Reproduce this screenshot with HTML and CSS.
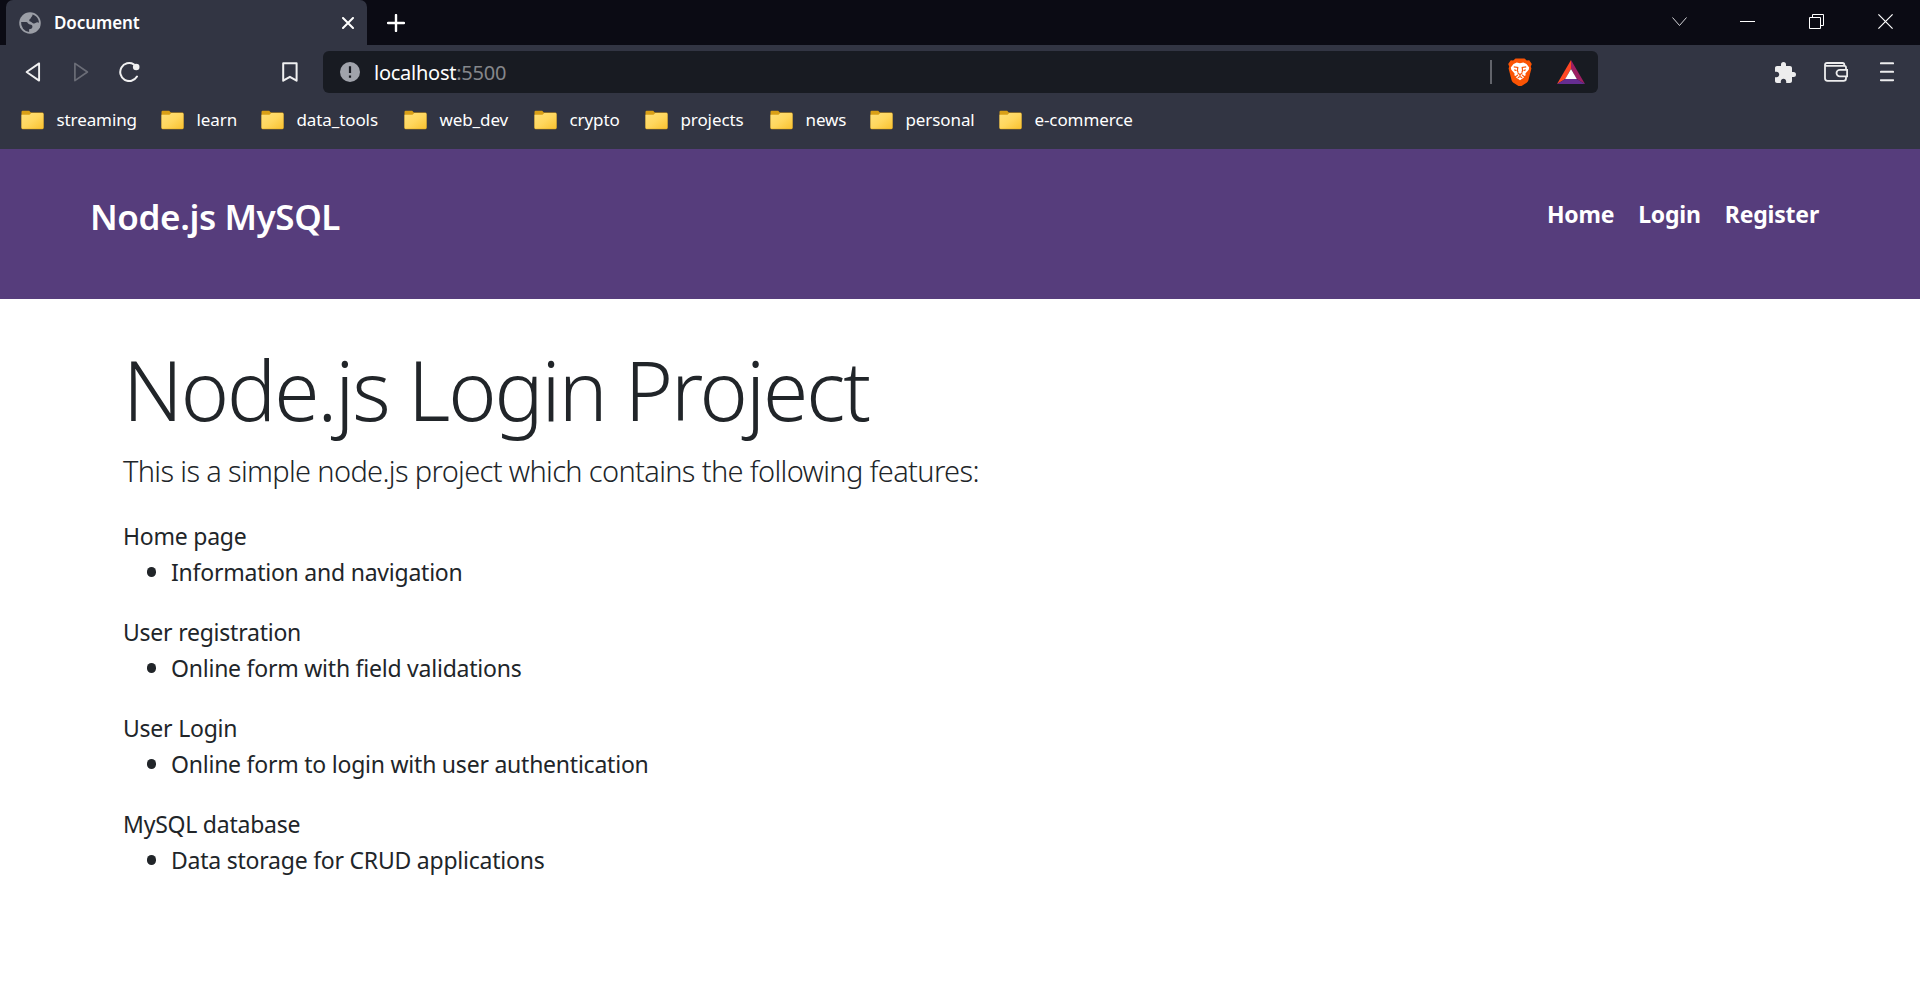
FILE: index.html
```html
<!DOCTYPE html>
<html lang="en">
<head>
<meta charset="utf-8">
<title>Document</title>
<link rel="stylesheet" href="styles.css">
</head>
<body>
<div class="tabstrip">
  <div class="tab">
    <svg class="globe" viewBox="0 0 20 20"><circle cx="10" cy="10" r="9.800" fill="#9b9ea6"/><path fill="#323543" d="M1.900 9.200h4.600c1.500 0 1.700 2 3.500 2.200 1.700.2 2.400.8 2.200 2.300-.2 1.600-1.500 1.900-3 2v2.400A8.200 8.200 0 0 1 1.900 9.200zM12.300 2.200c3.300.9 5.900 4 5.900 7.600-1.300-.9-2.400-.4-3.200.3-1.200.9-2.400.2-3.200-.6-.7-.7-2.500-.4-2.500-1.900 0-1.300 1.300-1.200 1.600-2.300.3-1.200 1.400-1.300 1.400-3.100z"/></svg>
    <span class="tab-title">Document</span>
    <svg class="tab-close" viewBox="0 0 12 12"><path d="M1 1l10 10M11 1L1 11" stroke="#fff" stroke-width="2" stroke-linecap="round"/></svg>
  </div>
  <svg class="new-tab" viewBox="0 0 18 18"><path d="M9 1v16M1 9h16" stroke="#fff" stroke-width="2.400" stroke-linecap="round"/></svg>
  <div class="window-controls">
    <svg viewBox="0 0 15 15"><path d="M.5 3.500l7 8 7-8" fill="none" stroke="#d5d5d8" stroke-width="1"/></svg>
    <svg viewBox="0 0 15 15"><path d="M0 7.500h15" stroke="#fff"/></svg>
    <svg viewBox="0 0 15 15"><path d="M.5 3.500h11v11H.5zM3.500 3.500v-3h11v11h-3" fill="none" stroke="#fff"/></svg>
    <svg viewBox="0 0 15 15"><path d="M.4.4l14.200 14.200M14.600.4L.4 14.600" stroke="#fff" stroke-width="1.200"/></svg>
  </div>
</div>
<div class="toolbar">
  <svg class="back" viewBox="0 0 16 20"><path d="M14.100 1.400v17.200L1.600 10z" fill="none" stroke="#f0f0f1" stroke-width="1.900" stroke-linejoin="round"/></svg>
  <svg class="forward" viewBox="0 0 16 20"><path d="M1.900 1.400v17.200L14.400 10z" fill="none" stroke="#6b6d77" stroke-width="1.700" stroke-linejoin="round"/></svg>
  <svg class="reload" viewBox="0 0 21 20"><path d="M18 14.600A9 9 0 1 1 14.800 2.300" fill="none" stroke="#f0f0f1" stroke-width="2" stroke-linecap="round"/><circle cx="17.200" cy="5" r="3.300" fill="#f0f0f1"/></svg>
  <svg class="bookmark" viewBox="0 0 16 20"><path d="M1.200 1.200h13.400v17.500l-6.700-3.900-6.700 3.900z" fill="none" stroke="#f0f0f1" stroke-width="2" stroke-linejoin="round"/></svg>
  <div class="address">
    <svg class="info" viewBox="0 0 20 20"><circle cx="10" cy="10" r="10" fill="#a0a3ab"/><path d="M10 4.300v6.700M10 13.400v2.400" stroke="#181b22" stroke-width="2.200"/></svg>
    <span class="url">localhost<span class="port">:5500</span></span>
    <span class="divider"></span>
    <svg class="brave" viewBox="0 0 24 28"><path fill="#fb5404" d="M7.500.5h9l2.300 2 2.400-.2L23.800 6l-1 2.600.6 1.800-3 11.800c-.4 1.500-1.400 2.300-2.600 3.100l-4.600 2.900c-.8.500-1.600.5-2.400 0l-4.600-2.900c-1.200-.8-2.200-1.600-2.600-3.100L.6 10.400l.6-1.800L.2 6l2.600-3.700 2.400.2z"/><path fill="#fff" d="M8.700 4.500l3.300.8 3.300-.8 3.200 1.400 2.700 3.700-.5 2.100-3.300 3.700.3 1.800-1.200.8-2.500-1.700-.1 1.300 2.300 1.600-4.200 3-4.200-3 2.300-1.600-.1-1.300L7.500 18l-1.200-.8.3-1.800-3.300-3.700-.5-2.100 2.700-3.700z"/><path fill="none" stroke="#fb5404" stroke-width="1.200" d="M5.800 8.800l4 .7-.4 3 .8 2.300M18.200 8.800l-4 .7.400 3-.8 2.300M6.200 11.800l2.200.8M17.800 11.800l-2.200.8M9.800 15.300l2.200 1.300 2.200-1.300M12 16.500v2M9.800 19.700l2.200-1.200 2.200 1.200"/></svg>
    <svg class="bat" viewBox="0 0 28 24"><path fill="#ff4724" d="M14 0v8.800L8.300 19 0 24z"/><path fill="#9e1f63" d="M14 0l14 24-8.300-5L14 8.800z"/><path fill="#662d91" d="M0 24l8.300-5h11.400l8.300 5z"/><path fill="#fff" d="M14 9l5.800 10H8.200z"/></svg>
  </div>
  <svg class="puzzle" viewBox="2 1 21 21"><path fill="#ededee" d="M20.500 11H19V7c0-1.100-.9-2-2-2h-4V3.500a2.500 2.500 0 0 0-5 0V5H4c-1.100 0-1.990.9-1.990 2v3.800H3.500c1.490 0 2.700 1.210 2.700 2.700s-1.210 2.700-2.700 2.700H2V20c0 1.100.9 2 2 2h3.800v-1.500c0-1.490 1.210-2.700 2.700-2.700 1.490 0 2.700 1.210 2.700 2.700V22H17c1.100 0 2-.9 2-2v-4h1.500a2.500 2.500 0 0 0 0-5z"/></svg>
  <svg class="wallet" viewBox="0 0 24 20"><g fill="none" stroke="#ededee" stroke-width="1.800"><path d="M22 7V5.500Q22 3.900 20.400 3.900H3Q1 3.900 1 2.400M1 2.600v13.700Q1 18.800 3.500 18.800h16Q22 18.800 22 16.500V15M1 2.900Q1 1 3 1h15.500q1.800 0 1.800 1.800v1"/><path d="M23.100 7.800h-7.300a3.300 3.300 0 0 0 0 6.600h7.300z"/></g></svg>
  <svg class="menu" viewBox="0 0 14 20"><path d="M.8 1.300h12.400M.8 9.800h12.400M.8 18.200h12.400" stroke="#ededee" stroke-width="1.900" stroke-linecap="round"/></svg>
</div>
<svg class="defs" width="0" height="0"><defs>
  <linearGradient id="fold" x1="0" y1="0" x2="1" y2="1"><stop offset="0" stop-color="#ffe07a"/><stop offset=".5" stop-color="#ffd75e"/><stop offset="1" stop-color="#f9c230"/></linearGradient>
  <symbol id="folder" viewBox="0 0 23 20"><path fill="#d99f16" d="M.5 2Q.5.700 1.700.700h6.500l1.600 1.800h11.500q1.200 0 1.200 1.200V18q0 1.300-1.300 1.300H1.800Q.5 19.300.5 18z"/><path fill="url(#fold)" d="M.5 4.800h8L10.300 3h11q1.200 0 1.200 1.200v13.300q0 1.200-1.200 1.200H1.700q-1.200 0-1.200-1.200z"/></symbol>
</defs></svg>
<div class="bookmarks">
  <div class="bm"><svg><use href="#folder"/></svg><span>streaming</span></div>
  <div class="bm"><svg><use href="#folder"/></svg><span>learn</span></div>
  <div class="bm"><svg><use href="#folder"/></svg><span>data_tools</span></div>
  <div class="bm"><svg><use href="#folder"/></svg><span>web_dev</span></div>
  <div class="bm"><svg><use href="#folder"/></svg><span>crypto</span></div>
  <div class="bm"><svg><use href="#folder"/></svg><span>projects</span></div>
  <div class="bm"><svg><use href="#folder"/></svg><span>news</span></div>
  <div class="bm"><svg><use href="#folder"/></svg><span>personal</span></div>
  <div class="bm"><svg><use href="#folder"/></svg><span>e-commerce</span></div>
</div>
<header class="site-header">
  <div class="brand">Node.js MySQL</div>
  <nav class="site-nav"><a>Home</a><a>Login</a><a>Register</a></nav>
</header>
<main class="content">
  <h1>Node.js Login Project</h1>
  <p class="lead">This is a simple node.js project which contains the following features:</p>
  <section><p>Home page</p><ul><li>Information and navigation</li></ul></section>
  <section><p>User registration</p><ul><li>Online form with field validations</li></ul></section>
  <section><p>User Login</p><ul><li>Online form to login with user authentication</li></ul></section>
  <section><p>MySQL database</p><ul><li>Data storage for CRUD applications</li></ul></section>
</main>
</body>
</html>
```
FILE: styles.css
```css
* { box-sizing: border-box; }
body {
  margin: 0;
  height: 1008px;
  overflow: hidden;
  background: #fff;
  color: #212529;
  font-family: "Noto Sans", "Open Sans", sans-serif;
  font-size: 23px;
}
svg { display: block; flex: none; }
.defs { position: absolute; }

.tabstrip {
  display: flex;
  align-items: center;
  height: 45px;
  padding-left: 6px;
  background: #0b0b14;
}
.tab {
  display: flex;
  align-items: center;
  width: 361px;
  height: 45px;
  padding: 0 13px;
  border-radius: 7px 7px 0 0;
  background: #323543;
}
.globe { width: 22px; height: 22px; }
.tab-title {
  flex: 1;
  margin-left: 13px;
  color: #fff;
  font-size: 17px;
  font-weight: 600;
  letter-spacing: -.1px;
}
.tab-close { width: 12px; height: 12px; }
.new-tab { width: 18px; height: 18px; margin-left: 20px; }
.window-controls {
  display: flex;
  gap: 54px;
  margin: 0 27px 2px auto;
}
.window-controls svg { width: 15px; height: 15px; }
.window-controls svg:first-child { margin-right: -1px; }

.toolbar {
  display: flex;
  align-items: center;
  height: 54px;
  padding-left: 25px;
  background: #323543;
}
.back, .forward, .bookmark { width: 16px; height: 20px; }
.forward { margin-left: 32px; }
.reload { width: 21px; height: 20px; margin-left: 30px; }
.bookmark { margin-left: 142px; }
.address {
  display: flex;
  align-items: center;
  width: 1275px;
  height: 42px;
  margin-left: 25px;
  padding: 0 13px 0 17px;
  border-radius: 6px;
  background: #181b22;
}
.info { width: 20px; height: 20px; }
.url { flex: 1; margin-left: 14px; color: #fff; font-size: 20px; letter-spacing: -.25px; }
.port { color: #85878b; }
.divider { width: 2px; height: 24px; background: #62646b; }
.brave { width: 24px; height: 28px; margin-left: 16px; }
.bat { width: 28px; height: 24px; margin-left: 25px; }
.puzzle { width: 21px; height: 21px; margin-left: 177px; }
.wallet { width: 24px; height: 20px; margin-left: 28px; }
.menu { width: 14px; height: 20px; margin-left: 32px; }

.bookmarks {
  display: grid;
  grid-template-columns: 140px 100px 143px 130px 111px 125px 100px 129px auto;
  height: 50px;
  padding: 0 0 10px 21px;
  background: #323543;
  color: #fff;
  font-size: 17px;
  letter-spacing: -.1px;
}
.bm { display: flex; align-items: center; gap: 12.500px; white-space: nowrap; }
.bm svg { width: 23px; height: 20px; margin-top: 1px; }

.site-header {
  display: flex;
  justify-content: space-between;
  height: 150px;
  padding: 42px 101px 0 90px;
  background: #563d7c;
  color: #fff;
}
.brand { font-size: 35px; font-weight: 600; line-height: 52px; letter-spacing: -.4px; }
.site-nav { display: flex; gap: 24px; font-weight: 700; line-height: 46px; letter-spacing: -.2px; }

.content { padding: 40px 123px 0; }
.content h1 { margin: 0; font-size: 82px; font-weight: 300; line-height: 100px; letter-spacing: -2.050px; }
.content p, .content ul { margin: 0; }
.content .lead { margin: 9px 0 25px; font-size: 29px; font-weight: 300; line-height: 45px; letter-spacing: -.66px; }
.content section { margin-bottom: 24px; line-height: 36px; letter-spacing: -.23px; }
.content ul { padding-left: 23.500px; list-style: none; }
.content li { display: flex; align-items: center; gap: 15px; }
.content li::before {
  content: "";
  width: 9.500px;
  height: 9.500px;
  border-radius: 50%;
  background: #212529;
}
```
